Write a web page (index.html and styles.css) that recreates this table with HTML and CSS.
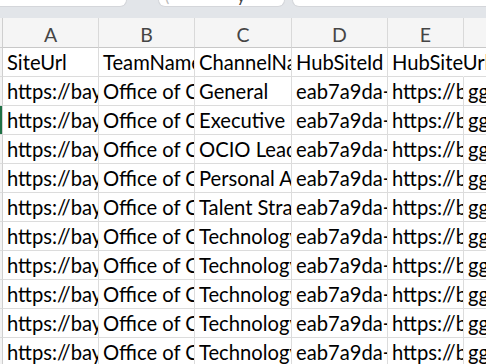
FILE: index.html
```html
<!DOCTYPE html>
<html>
<head>
<meta charset="utf-8">
<link rel="stylesheet" href="styles.css">
</head>
<body>
<div class="topbar">
  <div class="box box1"></div>
  <div class="box box2"><span class="frag1">(</span><span class="frag2">y</span></div>
  <div class="box box3"></div>
</div>
<div class="sheet">
  <div class="rh corner"></div>
  <div class="ch">A</div><div class="ch">B</div><div class="ch">C</div><div class="ch">D</div><div class="ch">E</div><div class="ch last"></div>

  <div class="rh"></div>
  <div class="c">SiteUrl</div><div class="c">TeamName</div><div class="c">ChannelName</div><div class="c">HubSiteId</div><div class="c over">HubSiteUrl</div><div class="c last"></div>

  <div class="rh"></div>
  <div class="c">https://bayergroup.sharepoint.com</div><div class="c">Office of CIO</div><div class="c">General</div><div class="c">eab7a9da-4c21</div><div class="c">https://bayergroup</div><div class="c last">gg</div>

  <div class="rh sel"></div>
  <div class="c">https://bayergroup.sharepoint.com</div><div class="c">Office of CIO</div><div class="c">Executive</div><div class="c">eab7a9da-4c21</div><div class="c">https://bayergroup</div><div class="c last">gg</div>

  <div class="rh"></div>
  <div class="c">https://bayergroup.sharepoint.com</div><div class="c">Office of CIO</div><div class="c">OCIO Leadership</div><div class="c">eab7a9da-4c21</div><div class="c">https://bayergroup</div><div class="c last">gg</div>

  <div class="rh"></div>
  <div class="c">https://bayergroup.sharepoint.com</div><div class="c">Office of CIO</div><div class="c">Personal Assistants</div><div class="c">eab7a9da-4c21</div><div class="c">https://bayergroup</div><div class="c last">gg</div>

  <div class="rh"></div>
  <div class="c">https://bayergroup.sharepoint.com</div><div class="c">Office of CIO</div><div class="c">Talent Strategy</div><div class="c">eab7a9da-4c21</div><div class="c">https://bayergroup</div><div class="c last">gg</div>

  <div class="rh"></div>
  <div class="c">https://bayergroup.sharepoint.com</div><div class="c">Office of CIO</div><div class="c">Technology</div><div class="c">eab7a9da-4c21</div><div class="c">https://bayergroup</div><div class="c last">gg</div>

  <div class="rh"></div>
  <div class="c">https://bayergroup.sharepoint.com</div><div class="c">Office of CIO</div><div class="c">Technology</div><div class="c">eab7a9da-4c21</div><div class="c">https://bayergroup</div><div class="c last">gg</div>

  <div class="rh"></div>
  <div class="c">https://bayergroup.sharepoint.com</div><div class="c">Office of CIO</div><div class="c">Technology</div><div class="c">eab7a9da-4c21</div><div class="c">https://bayergroup</div><div class="c last">gg</div>

  <div class="rh"></div>
  <div class="c">https://bayergroup.sharepoint.com</div><div class="c">Office of CIO</div><div class="c">Technology</div><div class="c">eab7a9da-4c21</div><div class="c">https://bayergroup</div><div class="c last">gg</div>

  <div class="rh"></div>
  <div class="c">https://bayergroup.sharepoint.com</div><div class="c">Office of CIO</div><div class="c">Technology</div><div class="c">eab7a9da-4c21</div><div class="c">https://bayergroup</div><div class="c last">gg</div>
</div>
</body>
</html>
```

FILE: styles.css
```css
html, body {
  margin: 0;
  padding: 0;
  width: 486px;
  height: 364px;
  overflow: hidden;
  background: #ffffff;
}

body {
  font-family: "Lato", "Open Sans", sans-serif;
}

.topbar {
  height: 18px;
  background: #e2e5e9;
  display: flex;
  align-items: flex-start;
  overflow: hidden;
}

.box {
  height: 7px;
  background: #ffffff;
  border: 1px solid #d4d6da;
  border-top: none;
  border-radius: 0 0 7px 7px;
  box-sizing: border-box;
  flex: none;
  position: relative;
  overflow: hidden;
}

.box1 {
  margin-left: -12px;
  width: 139px;
}

.box2 {
  margin-left: 31px;
  width: 127px;
}

.box3 {
  margin-left: 7px;
  width: 220px;
}

.frag1, .frag2 {
  position: absolute;
  font-size: 16px;
  line-height: 16px;
  color: #444;
  top: -12px;
}

.frag1 { left: 6px; color: #bbb; }
.frag2 { left: 78px; }

.sheet {
  display: grid;
  grid-template-columns: 3px 96px 96px 97px 96px 76px 1fr;
  grid-template-rows: 30px;
  grid-auto-rows: 29px;
}

.sheet > div {
  box-sizing: border-box;
  border-right: 1px solid #dcdcdc;
  border-bottom: 1px solid #dcdcdc;
  overflow: hidden;
  white-space: nowrap;
  min-width: 0;
}

.rh {
  background: #f3f3f3;
  border-right-color: #cfcfcf !important;
}

.rh.sel {
  background: #f3f3f3;
  box-shadow: inset 2px 0 0 #1e7145;
}

.corner {
  border-bottom-color: #cfcfcf !important;
}

.sheet > .ch {
  background: #f5f5f5;
  color: #454545;
  font-size: 19.5px;
  line-height: 28px;
  padding-top: 3px;
  text-align: center;
  border-bottom-color: #c8c8c8;
  border-right-color: #d9d9d9;
}

.sheet > .c {
  font-size: 20.2px;
  line-height: 28px;
  color: #000000;
  padding-left: 4px;
  text-overflow: clip;
}

.sheet > .c.over {
  overflow: visible;
  border-right-color: transparent;
  position: relative;
  z-index: 1;
}

.sheet > .last {
  border-right: none;
}
```
